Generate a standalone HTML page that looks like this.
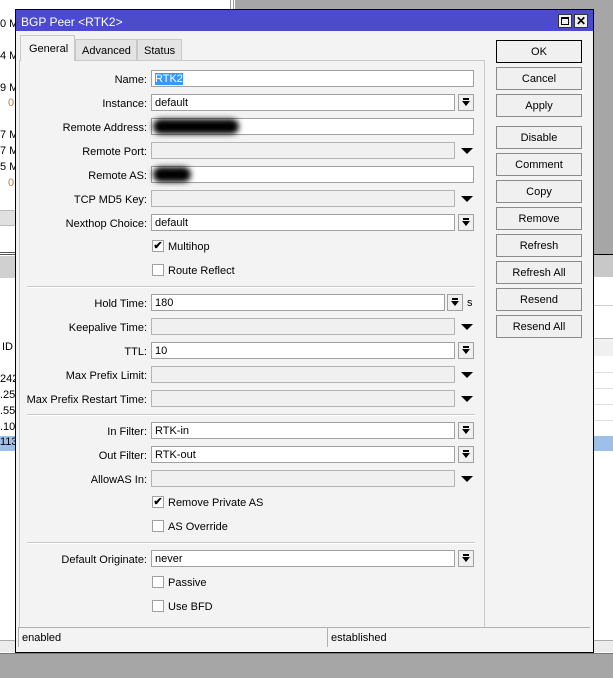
<!DOCTYPE html>
<html><head><style>
*{box-sizing:border-box;margin:0;padding:0}
body{width:613px;height:678px;position:relative;overflow:hidden;background:#fff;font-family:"Liberation Sans",Arial,sans-serif;font-size:11px;color:#000}
.abs{position:absolute}
.lbl{position:absolute;right:466px;text-align:right;white-space:nowrap;height:16px;line-height:16px;margin-top:2px}
.fld{position:absolute;left:151px;height:17px;border:1px solid #a0a0a0;background:#fff;line-height:17px;padding-left:3px}
.gray{background:#f0f0f0;border-color:#b4b4b4}
.dd{position:absolute;left:458px;width:16px;height:17px;border:1px solid #a0a0a0;background:#f0f0f0}
.dd:after{content:"";position:absolute;left:3px;top:6px;border-left:4px solid transparent;border-right:4px solid transparent;border-top:5px solid #000}
.dd:before{content:"";position:absolute;left:4px;top:3px;width:6px;height:2px;background:#000}
.tri{position:absolute;left:461px;width:0;height:0;border-left:6px solid transparent;border-right:6px solid transparent;border-top:6px solid #000}
.btn{position:absolute;left:496px;width:86px;height:23px;border:1px solid #8a8a8a;background:#f0f0f0;text-align:center;line-height:23px}
.cb{position:absolute;left:152px;width:12px;height:12px;border:1px solid #a0a0a0;background:#fff}
.cbl{position:absolute;left:168px;height:14px;line-height:16px}
.sep{position:absolute;left:27px;width:448px;height:2px;border-top:1px solid #c8c8c8;border-bottom:1px solid #fff}
</style></head><body>
<div class="abs" style="left:0;top:0;width:15px;height:678px;background:#fff"></div>
<div class="abs" style="left:0;top:18px">0 M</div>
<div class="abs" style="left:0;top:50px">4 M</div>
<div class="abs" style="left:0;top:82px">9 M</div>
<div class="abs" style="left:8px;top:97px;color:#b08040">0</div>
<div class="abs" style="left:0;top:129px">7 M</div>
<div class="abs" style="left:0;top:145px">7 M</div>
<div class="abs" style="left:0;top:161px">5 M</div>
<div class="abs" style="left:8px;top:177px;color:#b08040">0</div>
<div class="abs" style="left:0;top:210px;width:15px;height:16px;background:#e0e0e0;border-top:1px solid #bbb;border-bottom:1px solid #bbb"></div>
<div class="abs" style="left:0;top:252px;width:15px;height:3px;border-top:1px solid #555;border-bottom:1px solid #555"></div>
<div class="abs" style="left:0;top:256px;width:15px;height:22px;background:#d0d0d0"></div>
<div class="abs" style="left:2px;top:341px">ID</div>
<div class="abs" style="left:0;top:373px">242</div>
<div class="abs" style="left:0;top:389px">.25</div>
<div class="abs" style="left:0;top:405px">.55</div>
<div class="abs" style="left:0;top:421px">.10</div>
<div class="abs" style="left:0;top:436px;width:15px;height:15px;background:#9dbfe8">113</div>
<div class="abs" style="left:230px;top:0;width:4px;height:9px;border-left:1px solid #999;border-right:1px solid #999"></div>
<div class="abs" style="left:235px;top:0;width:378px;height:9px;background:#a6a6a6"></div>
<div class="abs" style="left:593px;top:0;width:20px;height:254px;background:#a6a6a6"></div>
<div class="abs" style="left:593px;top:254px;width:20px;height:1px;background:#000"></div>
<div class="abs" style="left:593px;top:255px;width:20px;height:22px;background:#c8c8c8"></div>
<div class="abs" style="left:593px;top:305px;width:20px;height:1px;background:#ccc"></div>
<div class="abs" style="left:593px;top:338px;width:20px;height:18px;background:#f0f0f0;border-top:1px solid #bbb"></div>
<div class="abs" style="left:593px;top:372px;width:20px;height:1px;background:#ddd"></div>
<div class="abs" style="left:593px;top:388px;width:20px;height:1px;background:#ddd"></div>
<div class="abs" style="left:593px;top:404px;width:20px;height:1px;background:#ddd"></div>
<div class="abs" style="left:593px;top:420px;width:20px;height:1px;background:#ddd"></div>
<div class="abs" style="left:593px;top:436px;width:20px;height:15px;background:#9dbfe8"></div>
<div class="abs" style="left:0;top:640px;width:613px;height:12px;background:#ececec;border-top:1px solid #aaa"></div>
<div class="abs" style="left:0;top:653px;width:613px;height:25px;background:#a6a6a6;border-top:1px solid #777"></div>

<div class="abs" style="left:15px;top:9px;width:579px;height:644px;background:#f3f3f3;border:1px solid #000"></div>
<div class="abs" style="left:16px;top:10px;width:577px;height:21px;background:#4b4bcc"></div>
<div class="abs" style="left:21px;top:15px;color:#fff;font-size:12px;line-height:15px">BGP Peer &lt;RTK2&gt;</div>
<div class="abs" style="left:558px;top:14px;width:14px;height:14px;background:#f0f0f0;border:1px solid #333"><div style="position:absolute;left:2px;top:2px;width:8px;height:8px;border:1px solid #000;border-top-width:2px"></div></div>
<div class="abs" style="left:574px;top:14px;width:14px;height:14px;background:#f0f0f0;border:1px solid #333;font-weight:bold;font-size:12px;line-height:12px;text-align:center">✕</div>

<div class="abs" style="left:19px;top:60px;width:466px;height:568px;border:1px solid #c8c8c8;background:#f3f3f3"></div>
<div class="abs" style="left:20px;top:35px;width:55px;height:26px;background:#f3f3f3;border:1px solid #c8c8c8;border-bottom:none;line-height:26px;padding-left:8px">General</div>
<div class="abs" style="left:75px;top:39px;width:62px;height:21px;background:#e4e4e4;border:1px solid #c8c8c8;border-bottom:none;line-height:22px;padding-left:6px">Advanced</div>
<div class="abs" style="left:137px;top:39px;width:45px;height:21px;background:#e4e4e4;border:1px solid #c8c8c8;border-bottom:none;line-height:22px;padding-left:6px">Status</div>

<div class="lbl" style="top:70px">Name:</div>
<div class="fld" style="top:70px;width:323px"><span style="background:#3399ff;color:#fff">RTK2</span></div>
<div class="lbl" style="top:94px">Instance:</div>
<div class="fld" style="top:94px;width:304px">default</div><div class="dd" style="top:94px"></div>
<div class="lbl" style="top:118px">Remote Address:</div>
<div class="fld" style="top:118px;width:323px"></div>
<div class="abs" style="left:153px;top:119px;width:86px;height:15px;background:#000;border-radius:8px;filter:blur(3px)"></div>
<div class="lbl" style="top:142px">Remote Port:</div>
<div class="fld gray" style="top:142px;width:304px"></div><div class="tri" style="top:148px"></div>
<div class="lbl" style="top:166px">Remote AS:</div>
<div class="fld" style="top:166px;width:323px"></div>
<div class="abs" style="left:153px;top:167px;width:38px;height:15px;background:#000;border-radius:8px;filter:blur(3px)"></div>
<div class="lbl" style="top:190px">TCP MD5 Key:</div>
<div class="fld gray" style="top:190px;width:304px"></div><div class="tri" style="top:196px"></div>
<div class="lbl" style="top:214px">Nexthop Choice:</div>
<div class="fld" style="top:214px;width:304px">default</div><div class="dd" style="top:214px"></div>
<div class="cb" style="top:240px;font-size:11px;line-height:10px;text-align:center;font-weight:bold">✔</div><div class="cbl" style="top:239px">Multihop</div>
<div class="cb" style="top:264px"></div><div class="cbl" style="top:263px">Route Reflect</div>
<div class="sep" style="top:286px"></div>

<div class="lbl" style="top:294px">Hold Time:</div>
<div class="fld" style="top:294px;width:294px">180</div><div class="dd" style="top:294px;left:447px"></div><div class="abs" style="left:467px;top:297px">s</div>
<div class="lbl" style="top:318px">Keepalive Time:</div>
<div class="fld gray" style="top:318px;width:304px"></div><div class="tri" style="top:324px"></div>
<div class="lbl" style="top:342px">TTL:</div>
<div class="fld" style="top:342px;width:304px">10</div><div class="dd" style="top:342px"></div>
<div class="lbl" style="top:366px">Max Prefix Limit:</div>
<div class="fld gray" style="top:366px;width:304px"></div><div class="tri" style="top:372px"></div>
<div class="lbl" style="top:390px">Max Prefix Restart Time:</div>
<div class="fld gray" style="top:390px;width:304px"></div><div class="tri" style="top:396px"></div>
<div class="sep" style="top:414px"></div>

<div class="lbl" style="top:422px">In Filter:</div>
<div class="fld" style="top:422px;width:304px">RTK-in</div><div class="dd" style="top:422px"></div>
<div class="lbl" style="top:446px">Out Filter:</div>
<div class="fld" style="top:446px;width:304px">RTK-out</div><div class="dd" style="top:446px"></div>
<div class="lbl" style="top:470px">AllowAS In:</div>
<div class="fld gray" style="top:470px;width:304px"></div><div class="tri" style="top:476px"></div>
<div class="cb" style="top:496px;font-size:11px;line-height:10px;text-align:center;font-weight:bold">✔</div><div class="cbl" style="top:495px">Remove Private AS</div>
<div class="cb" style="top:520px"></div><div class="cbl" style="top:519px">AS Override</div>
<div class="sep" style="top:542px"></div>

<div class="lbl" style="top:550px">Default Originate:</div>
<div class="fld" style="top:550px;width:304px">never</div><div class="dd" style="top:550px"></div>
<div class="cb" style="top:576px"></div><div class="cbl" style="top:575px">Passive</div>
<div class="cb" style="top:600px"></div><div class="cbl" style="top:599px">Use BFD</div>

<div class="abs" style="left:18px;top:627px;width:308px;height:20px;border-top:1px solid #b0b0b0;border-left:1px solid #b0b0b0;line-height:21px;padding-left:3px">enabled</div>
<div class="abs" style="left:327px;top:627px;width:263px;height:20px;border-top:1px solid #b0b0b0;border-left:1px solid #b0b0b0;line-height:21px;padding-left:3px">established</div>

<div class="btn" style="top:40px;border-color:#000">OK</div>
<div class="btn" style="top:67px">Cancel</div>
<div class="btn" style="top:94px">Apply</div>
<div class="btn" style="top:126px">Disable</div>
<div class="btn" style="top:153px">Comment</div>
<div class="btn" style="top:180px">Copy</div>
<div class="btn" style="top:207px">Remove</div>
<div class="btn" style="top:234px">Refresh</div>
<div class="btn" style="top:261px">Refresh All</div>
<div class="btn" style="top:288px">Resend</div>
<div class="btn" style="top:315px">Resend All</div>
</body></html>
